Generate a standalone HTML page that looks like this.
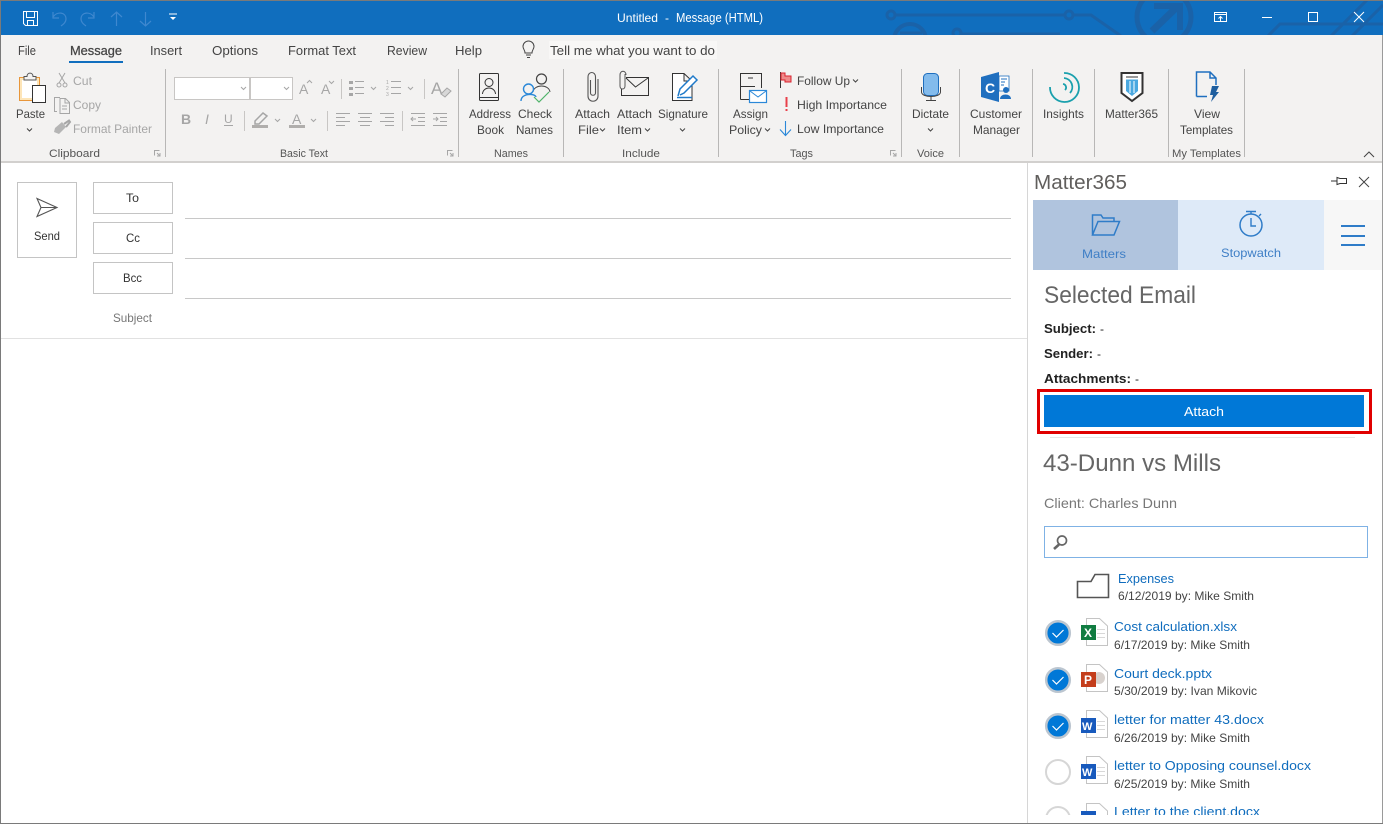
<!DOCTYPE html>
<html lang="en"><head><meta charset="utf-8"><title>Untitled - Message (HTML)</title>
<style>
html,body{margin:0;padding:0;background:#fff;width:1383px;height:824px;overflow:hidden}
svg{display:block;position:absolute;left:0;top:0}
text{font-family:"Liberation Sans",sans-serif;font-size:12px;fill:#444;white-space:pre}
.t{font-size:13px;fill:#444}
.dis{fill:#a6a6a6}
.g{font-size:11px;fill:#555}
.l{fill:#0f6cbd;font-size:13px}
.s{fill:#444;font-size:12px}
.h{font-size:24px;fill:#666}
.b{font-weight:bold;font-size:13px;fill:#222}
.ln{fill:none;stroke:#444;stroke-width:1}
.dl{fill:none;stroke:#a6a6a6;stroke-width:1}
</style></head><body>
<svg width="1383" height="824" viewBox="0 0 1383 824" xmlns="http://www.w3.org/2000/svg">
<defs><clipPath id="tb"><rect x="0" y="1" width="1383" height="34"/></clipPath><clipPath id="lst"><rect x="1030" y="560" width="350" height="255"/></clipPath></defs>
<rect width="1383" height="824" fill="#fff"/>
<!-- title bar -->
<rect x="0" y="0" width="1383" height="35" fill="#106ebe"/>
<g clip-path="url(#tb)" fill="none" stroke="#1a62a8" stroke-width="3">
<path d="M896 15H1064M1074 15H1091L1121 36"/><circle cx="891" cy="15" r="4"/><circle cx="1069" cy="15" r="4"/>
<path d="M962 34H1060"/><circle cx="957" cy="33" r="4"/>
<circle cx="910" cy="40" r="16" stroke-width="4"/><path d="M900 33H922" stroke-width="3"/>
<circle cx="1164" cy="17" r="27" stroke-width="5"/>
<path d="M1152 31L1176 8" stroke-width="7"/><path d="M1154 6H1180V30" stroke-width="6"/>
<path d="M1268 36L1280 24H1383M1331 36L1367 0M1352 36L1383 5"/>
</g>
<!-- QAT -->
<g fill="none" stroke="#fff" stroke-width="1">
<path d="M23.500 11.500H37.500V25.500H25.500L23.500 23.500Z"/><path d="M26.500 11.500V17.500H34.500V11.500M27.500 25.500V20.500H33.500V25.500"/>
</g>
<g fill="none" stroke="#3f88cf" stroke-width="1.200">
<path d="M53 12V18H59M53 17C57 11 66 12 66 19C66 22 64 24 61 26"/>
<path d="M94 12V18H88M94 17C90 11 81 12 81 19C81 22 83 24 86 26"/>
<path d="M116.500 26V12M111 17L116.500 12L122 17"/><path d="M145.500 12V26M140 21L145.500 26L151 21"/>
</g>
<path d="M169 14H177" stroke="#fff" stroke-width="1"/><path d="M170 17H176L173 20Z" fill="#fff"/>
<text x="617" y="22" textLength="41" lengthAdjust="spacingAndGlyphs" style="fill:#fff">Untitled</text>
<text x="665" y="22" style="fill:#fff">-</text>
<text x="676" y="22" textLength="87" lengthAdjust="spacingAndGlyphs" style="fill:#fff;font-size:12.500px">Message (HTML)</text>
<g fill="none" stroke="#fff" stroke-width="1">
<path d="M1214.500 12.500H1226.500V21.500H1214.500ZM1214.500 14.500H1226.500M1220.500 21V16.500M1218.500 18.500L1220.500 16.500L1222.500 18.500"/>
<path d="M1262 17.500H1272"/>
<rect x="1308.500" y="12.500" width="9" height="9"/>
<path d="M1354 12L1364 22M1364 12L1354 22"/>
</g>
<!-- ribbon -->
<rect x="0" y="35" width="1383" height="126" fill="#f3f2f1"/>
<rect x="0" y="161" width="1383" height="2" fill="#d2d0ce"/>
<text class="t" x="18" y="55" textLength="18" lengthAdjust="spacingAndGlyphs">File</text>
<text class="t" x="70" y="55" textLength="52" lengthAdjust="spacingAndGlyphs" style="stroke:#444;stroke-width:.25">Message</text>
<rect x="69" y="61" width="54" height="2" fill="#106ebe"/>
<text class="t" x="150" y="55" textLength="32" lengthAdjust="spacingAndGlyphs">Insert</text>
<text class="t" x="212" y="55" textLength="46" lengthAdjust="spacingAndGlyphs">Options</text>
<text class="t" x="288" y="55" textLength="68" lengthAdjust="spacingAndGlyphs">Format Text</text>
<text class="t" x="387" y="55" textLength="40" lengthAdjust="spacingAndGlyphs">Review</text>
<text class="t" x="455" y="55" textLength="27" lengthAdjust="spacingAndGlyphs">Help</text>
<rect x="549" y="41" width="168" height="18" fill="#f8f7f6"/>
<text class="t" x="550" y="55" textLength="165" lengthAdjust="spacingAndGlyphs">Tell me what you want to do</text>
<path d="M525 53C525 50 523 49 523 46.500A5.500 5.500 0 0 1 534 46.500C534 49 532 50 532 53ZM526 55H531M527 57.500H530" fill="none" stroke="#444"/>
<!-- separators -->
<g fill="#b8b7b6">
<rect x="165" y="69" width="1" height="88"/><rect x="458" y="69" width="1" height="88"/><rect x="563" y="69" width="1" height="88"/><rect x="718" y="69" width="1" height="88"/><rect x="901" y="69" width="1" height="88"/><rect x="959" y="69" width="1" height="88"/><rect x="1032" y="69" width="1" height="88"/><rect x="1094" y="69" width="1" height="88"/><rect x="1168" y="69" width="1" height="88"/><rect x="1244" y="69" width="1" height="88"/>
</g>
<!-- clipboard -->
<rect x="19.500" y="77.500" width="20" height="23" fill="#fde5b8" stroke="#e8963a"/>
<rect x="22" y="80" width="15" height="18" fill="#fff"/>
<path d="M24 80V76.500H27C27 72 33 72 33 76.500H36V80Z" fill="#f3f2f1" stroke="#555"/>
<rect x="32.500" y="85.500" width="13" height="17" fill="#fff" stroke="#333"/>
<text x="16" y="118" textLength="29" lengthAdjust="spacingAndGlyphs">Paste</text>
<path d="M27 128.500L29.500 131L32 128.500" fill="none" stroke="#444"/>
<path class="dl" d="M59 73L65 83M65 73L59 83"/><circle class="dl" cx="59" cy="85" r="2"/><circle class="dl" cx="65" cy="85" r="2"/>
<text class="dis" x="73" y="85" textLength="19" lengthAdjust="spacingAndGlyphs">Cut</text>
<path class="dl" d="M57 111.500H54.500V97.500H60M60 100.500V113.500H69.500V102.500L65.500 98.500H60V100.500M65 99V103H69.500M62 106H67M62 109H67"/>
<text class="dis" x="73" y="109" textLength="28" lengthAdjust="spacingAndGlyphs">Copy</text>
<path d="M62 122L66 127L59 134L54 132L55 128Z" fill="#b5b5b5"/><path d="M64 124L69 120.500L70 122L66 127" fill="none" stroke="#a6a6a6" stroke-width="2"/>
<text class="dis" x="73" y="133" textLength="79" lengthAdjust="spacingAndGlyphs">Format Painter</text>
<text class="g" x="49" y="157" textLength="51" lengthAdjust="spacingAndGlyphs">Clipboard</text>
<path class="dl" d="M154.500 155.500V150.500H159.500M157 153L160 156M160 153V156H157"/>
<!-- basic text -->
<rect x="174.500" y="77.500" width="75" height="22" fill="#fff" stroke="#c8c6c4"/>
<rect x="250.500" y="77.500" width="42" height="22" fill="#fff" stroke="#c8c6c4"/>
<path class="dl" d="M241 87L243.500 89.500L246 87M284 87L286.500 89.500L289 87"/>
<text class="dis" x="299" y="94" style="font-size:14px">A</text><path class="dl" d="M307 83L309.500 80.500L312 83"/>
<text class="dis" x="321" y="94" style="font-size:14px">A</text><path class="dl" d="M329 81L331.500 83.500L334 81"/>
<rect x="341" y="79" width="1" height="20" fill="#c8c6c4"/>
<g fill="#a6a6a6"><rect x="349" y="81" width="4" height="3"/><rect x="349" y="87" width="4" height="3"/><rect x="349" y="93" width="4" height="3"/><rect x="355" y="81" width="9" height="1"/><rect x="355" y="87" width="9" height="1"/><rect x="355" y="93" width="9" height="1"/>
<rect x="391" y="81" width="10" height="1"/><rect x="391" y="87" width="10" height="1"/><rect x="391" y="93" width="10" height="1"/>
<rect x="424" y="79" width="1" height="20" fill="#c8c6c4"/></g>
<g class="dis"><text class="dis" x="386" y="84" style="font-size:5px">1</text><text class="dis" x="386" y="90" style="font-size:5px">2</text><text class="dis" x="386" y="96" style="font-size:5px">3</text></g>
<path class="dl" d="M371 87L373.500 89.500L376 87M408 87L410.500 89.500L413 87"/>
<text class="dis" x="431" y="94" style="font-size:17px">A</text>
<path d="M441 94L447 88L451 91L445 97Z" fill="#d8d8d8" stroke="#a6a6a6"/>
<text class="dis" x="181" y="124" style="font-size:14px;font-weight:bold">B</text>
<text class="dis" x="205" y="124" style="font-size:14px;font-style:italic">I</text>
<text class="dis" x="224" y="123" style="font-size:12px">U</text><rect x="224" y="125" width="9" height="1" fill="#a6a6a6"/>
<rect x="244" y="111" width="1" height="20" fill="#c8c6c4"/>
<path d="M255 121L263 113L267 116L259 124H255Z" fill="none" stroke="#a6a6a6" stroke-width="1.500"/><rect x="252" y="125" width="16" height="3" fill="#b0aeac"/>
<path class="dl" d="M275 119L277.500 121.500L280 119M311 119L313.500 121.500L316 119"/>
<text class="dis" x="292" y="124" style="font-size:14px">A</text><rect x="289" y="125" width="16" height="3" fill="#b0aeac"/>
<rect x="327" y="111" width="1" height="20" fill="#c8c6c4"/>
<g fill="#a6a6a6">
<rect x="336" y="113" width="14" height="1"/><rect x="336" y="117" width="9" height="1"/><rect x="336" y="121" width="14" height="1"/><rect x="336" y="125" width="9" height="1"/>
<rect x="358" y="113" width="14" height="1"/><rect x="360" y="117" width="10" height="1"/><rect x="358" y="121" width="14" height="1"/><rect x="360" y="125" width="10" height="1"/>
<rect x="380" y="113" width="14" height="1"/><rect x="385" y="117" width="9" height="1"/><rect x="380" y="121" width="14" height="1"/><rect x="385" y="125" width="9" height="1"/>
<rect x="402" y="111" width="1" height="20" fill="#c8c6c4"/>
<rect x="411" y="113" width="14" height="1"/><rect x="418" y="117" width="7" height="1"/><rect x="418" y="121" width="7" height="1"/><rect x="411" y="125" width="14" height="1"/>
<rect x="433" y="113" width="14" height="1"/><rect x="440" y="117" width="7" height="1"/><rect x="440" y="121" width="7" height="1"/><rect x="433" y="125" width="14" height="1"/>
</g>
<path class="dl" d="M416 119H411M413 117L411 119L413 121M433 119H438M436 117L438 119L436 121"/>
<text class="g" x="280" y="157" textLength="48" lengthAdjust="spacingAndGlyphs">Basic Text</text>
<path class="dl" d="M447.500 155.500V150.500H452.500M450 153L453 156M453 153V156H450"/>
<!-- names -->
<rect x="479.500" y="73.500" width="19" height="27" rx="1" fill="none" stroke="#333"/><path d="M480 97.500H498" stroke="#333"/>
<circle cx="489" cy="82.500" r="4" fill="none" stroke="#333"/><path d="M482.500 94C483 86 495 86 495.500 94" fill="none" stroke="#333"/>
<text x="469" y="118" textLength="42" lengthAdjust="spacingAndGlyphs">Address</text>
<text x="477" y="134" textLength="27" lengthAdjust="spacingAndGlyphs">Book</text>
<circle cx="541.500" cy="79" r="5" fill="none" stroke="#444" stroke-width="1.200"/><path d="M533 92C534 84 549 84 550 92" fill="none" stroke="#444"/>
<circle cx="528.500" cy="89" r="5" fill="#f3f2f1" stroke="#2b88d8" stroke-width="1.400"/><path d="M521 101C521 93 535 93 536 97" fill="none" stroke="#2b88d8" stroke-width="1.400"/>
<path d="M534 97L539 102L549 92" fill="none" stroke="#4fb36a" stroke-width="1.200"/>
<text x="518" y="118" textLength="34" lengthAdjust="spacingAndGlyphs">Check</text>
<text x="516" y="134" textLength="37" lengthAdjust="spacingAndGlyphs">Names</text>
<text class="g" x="494" y="157" textLength="34" lengthAdjust="spacingAndGlyphs">Names</text>
<!-- include -->
<path d="M598 79V96C598 103 588 103 588 96V77C588 71 595.500 71 595.500 77V93C595.500 96 590.500 96 590.500 93V80" fill="none" stroke="#555" stroke-width="1.100"/>
<text x="575" y="118" textLength="35" lengthAdjust="spacingAndGlyphs">Attach</text>
<text x="578" y="134" textLength="21" lengthAdjust="spacingAndGlyphs">File</text><path class="ln" d="M600 128.500L602.500 131L605 128.500"/>
<path d="M626 77.500H648.500V95.500H621.500V87M626 78L635.500 87L648 78" fill="none" stroke="#333"/>
<path d="M625 74V86C625 90 620 90 620 86V75C620 70 626 70 626 75" fill="#f3f2f1" stroke="#555"/>
<text x="617" y="118" textLength="35" lengthAdjust="spacingAndGlyphs">Attach</text>
<text x="617" y="134" textLength="25" lengthAdjust="spacingAndGlyphs">Item</text><path class="ln" d="M645 128.500L647.500 131L650 128.500"/>
<path d="M672 73.500H684L692 81V100.500H672.500V73.500ZM684 74V81H692" fill="#fff" stroke="#333"/>
<path d="M678 96L680 89L693 76L697 80L684 93L680 95" fill="#fff" stroke="#1f7ac9" stroke-width="1.500"/><path d="M677 97.500H692" stroke="#1f7ac9" stroke-width="1.500"/>
<text x="658" y="118" textLength="50" lengthAdjust="spacingAndGlyphs">Signature</text><path class="ln" d="M680 128.500L682.500 131L685 128.500"/>
<text class="g" x="622" y="157" textLength="38" lengthAdjust="spacingAndGlyphs">Include</text>
<!-- tags -->
<path d="M740.500 99.500V73.500H761.500V88M740.500 86.500H755M740.500 99.500H749M748 78H753" fill="none" stroke="#333"/>
<rect x="749.500" y="90.500" width="17" height="12" fill="#fff" stroke="#2b88d8" stroke-width="1.200"/><path d="M750 91L758 97L766 91" fill="none" stroke="#2b88d8"/>
<text x="733" y="118" textLength="35" lengthAdjust="spacingAndGlyphs">Assign</text>
<text x="729" y="134" textLength="33" lengthAdjust="spacingAndGlyphs">Policy</text><path class="ln" d="M765 128.500L767.500 131L770 128.500"/>
<path d="M780.500 72V88" stroke="#333"/><path d="M781 73H785V76H791V82H785V80H781Z" fill="#ef8a8a" stroke="#d9232e"/>
<text x="797" y="85" textLength="53" lengthAdjust="spacingAndGlyphs">Follow Up</text><path class="ln" d="M853 79.500L855.500 82L858 79.500"/>
<rect x="785.500" y="97" width="2" height="10" fill="#e8404a"/><rect x="785.500" y="109" width="2" height="2" fill="#e8404a"/>
<text x="797" y="109" textLength="90" lengthAdjust="spacingAndGlyphs">High Importance</text>
<path d="M785.500 121V135M780 129.500L785.500 135.500L791 129.500" fill="none" stroke="#2b88d8" stroke-width="1.100"/>
<text x="797" y="133" textLength="87" lengthAdjust="spacingAndGlyphs">Low Importance</text>
<text class="g" x="790" y="157" textLength="23" lengthAdjust="spacingAndGlyphs">Tags</text>
<path class="dl" d="M890.500 155.500V150.500H895.500M893 153L896 156M896 153V156H893"/>
<!-- voice -->
<rect x="923.500" y="73.500" width="15" height="22" rx="4" fill="#83bbec" stroke="#1f6fbf"/>
<path d="M921.500 87V92C921.500 98 940.500 98 940.500 92V87M931 97V100M926 100.500H936" fill="none" stroke="#444"/>
<text x="912" y="118" textLength="37" lengthAdjust="spacingAndGlyphs">Dictate</text><path class="ln" d="M928 128.500L930.500 131L933 128.500"/>
<text class="g" x="917" y="157" textLength="27" lengthAdjust="spacingAndGlyphs">Voice</text>
<!-- customer manager -->
<path d="M981 77L999 72V102L981 97Z" fill="#1f6fbf"/>
<rect x="999" y="76" width="10" height="15" fill="#fff" stroke="#1f6fbf" stroke-width=".8"/>
<path d="M1001 79H1007M1001 82H1005M1001 85H1004" stroke="#1f6fbf"/>
<text x="985" y="93" style="font-size:14px;font-weight:bold;fill:#fff">C</text>
<circle cx="1006" cy="90" r="3" fill="#1f6fbf"/><path d="M1000 99C1000 93 1011 93 1011 99Z" fill="#1f6fbf"/>
<text x="970" y="118" textLength="52" lengthAdjust="spacingAndGlyphs">Customer</text>
<text x="973" y="134" textLength="47" lengthAdjust="spacingAndGlyphs">Manager</text>
<!-- insights -->
<g fill="none" stroke="#1aa0ad" stroke-width="1.800">
<path d="M1064 73A14.500 14.500 0 1 1 1050 87"/><path d="M1064 78A9 9 0 0 1 1070 93"/><path d="M1063 84A3.500 3.500 0 0 1 1065 90"/>
</g>
<text x="1043" y="118" textLength="41" lengthAdjust="spacingAndGlyphs">Insights</text>
<!-- matter365 -->
<path d="M1121.500 73H1142.500V93L1132 101L1121.500 93Z" fill="#fff" stroke="#333" stroke-width="2"/>
<path d="M1126 77H1138" stroke="#333"/><path d="M1126 79.500H1138V91L1132 96L1126 91Z" fill="#4aa8e0"/><path d="M1130 81V93M1134 81V93" stroke="#fff"/>
<text x="1105" y="118" textLength="53" lengthAdjust="spacingAndGlyphs">Matter365</text>
<!-- templates -->
<path d="M1196.500 96.500V72H1210L1216 78V85M1196.500 96.500H1207M1210 72V78H1216" fill="none" stroke="#1f6fbf" stroke-width="1.500"/>
<path d="M1212 86H1219L1216 92H1219L1211 102L1213 95H1210Z" fill="#1f5f9f"/>
<text x="1194" y="118" textLength="26" lengthAdjust="spacingAndGlyphs">View</text>
<text x="1180" y="134" textLength="53" lengthAdjust="spacingAndGlyphs">Templates</text>
<text class="g" x="1172" y="157" textLength="69" lengthAdjust="spacingAndGlyphs">My Templates</text>
<path d="M1364 157L1369 152L1374 157" fill="none" stroke="#444"/>
<!-- compose -->
<rect x="17.500" y="182.500" width="59" height="75" fill="#fff" stroke="#c4c4c4"/>
<path d="M37 198.500L57 207.500L37 216.500L41 207.500ZM41 207.500H57" fill="none" stroke="#555" stroke-width="1.100"/>
<text x="34" y="240" textLength="26" lengthAdjust="spacingAndGlyphs" style="fill:#333">Send</text>
<rect x="93.500" y="182.500" width="79" height="31" fill="#fff" stroke="#c4c4c4"/>
<rect x="93.500" y="222.500" width="79" height="31" fill="#fff" stroke="#c4c4c4"/>
<rect x="93.500" y="262.500" width="79" height="31" fill="#fff" stroke="#c4c4c4"/>
<text x="126" y="202" textLength="13" lengthAdjust="spacingAndGlyphs" style="fill:#333">To</text>
<text x="126" y="242" textLength="14" lengthAdjust="spacingAndGlyphs" style="fill:#333">Cc</text>
<text x="123" y="282" textLength="19" lengthAdjust="spacingAndGlyphs" style="fill:#333">Bcc</text>
<text x="113" y="322" textLength="39" lengthAdjust="spacingAndGlyphs" style="fill:#777">Subject</text>
<g fill="#c8c8c8"><rect x="185" y="218" width="826" height="1"/><rect x="185" y="258" width="826" height="1"/><rect x="185" y="298" width="826" height="1"/></g>
<rect x="1" y="338" width="1026" height="1" fill="#e1e1e1"/>
<!-- panel -->
<rect x="1027" y="163" width="1" height="660" fill="#d6d6d6"/>
<text x="1034" y="189" textLength="93" lengthAdjust="spacingAndGlyphs" style="font-size:20px;fill:#605e5c">Matter365</text>
<path d="M1331 181H1337M1337 177.500V184.500L1340 183.500H1346.500V178.500H1340Z" fill="none" stroke="#333"/>
<path d="M1359 177L1369 187M1369 177L1359 187" fill="none" stroke="#444"/>
<rect x="1033" y="200" width="145" height="70" fill="#b0c4de"/>
<rect x="1178" y="200" width="146" height="70" fill="#deeaf8"/>
<rect x="1324" y="200" width="59" height="70" fill="#f7f7f7"/>
<path d="M1092.500 235V215H1101L1103 218H1114V221M1092.500 235L1098 221.500H1119.500L1114 235Z" fill="none" stroke="#2f7cc8" stroke-width="1.500"/>
<text x="1082" y="258" textLength="44" lengthAdjust="spacingAndGlyphs" style="fill:#3f7fc6">Matters</text>
<circle cx="1251" cy="225" r="11" fill="none" stroke="#2f7cc8" stroke-width="1.500"/><path d="M1251 218V226H1256M1246 211.500H1256M1251 212V214M1259 216L1261 214" fill="none" stroke="#2f7cc8" stroke-width="1.400"/>
<text x="1221" y="257" textLength="60" lengthAdjust="spacingAndGlyphs" style="fill:#3f7fc6">Stopwatch</text>
<g fill="#2f7cc8"><rect x="1341" y="225" width="24" height="2"/><rect x="1341" y="235" width="24" height="2"/><rect x="1341" y="244" width="24" height="2"/></g>
<text class="h" x="1044" y="303" textLength="152" lengthAdjust="spacingAndGlyphs">Selected Email</text>
<text class="b" x="1044" y="333" textLength="52" lengthAdjust="spacingAndGlyphs">Subject:</text><text x="1100" y="333" style="fill:#222">-</text>
<text class="b" x="1044" y="358" textLength="49" lengthAdjust="spacingAndGlyphs">Sender:</text><text x="1097" y="358" style="fill:#222">-</text>
<text class="b" x="1044" y="383" textLength="87" lengthAdjust="spacingAndGlyphs">Attachments:</text><text x="1135" y="383" style="fill:#222">-</text>
<rect x="1038.500" y="390.500" width="332" height="42" fill="none" stroke="#e00000" stroke-width="3"/>
<rect x="1044" y="395" width="320" height="32" fill="#0078d7"/>
<text x="1184" y="416" textLength="40" lengthAdjust="spacingAndGlyphs" style="fill:#fff;font-size:13px">Attach</text>
<rect x="1050" y="437" width="305" height="1" fill="#e6e6e6"/>
<text class="h" x="1043" y="471" textLength="178" lengthAdjust="spacingAndGlyphs">43-Dunn vs Mills</text>
<text x="1044" y="508" textLength="133" lengthAdjust="spacingAndGlyphs" style="font-size:14px;fill:#777">Client: Charles Dunn</text>
<rect x="1044.500" y="526.500" width="323" height="31" fill="#fff" stroke="#7fb2e5"/>
<circle cx="1062" cy="540.500" r="4.500" fill="none" stroke="#666" stroke-width="1.700"/><path d="M1059 544.500L1054 549" stroke="#666" stroke-width="2.600"/>
<!-- list -->
<path d="M1077.500 597.500V581.500H1091L1095 574.500H1108.500V597.500Z" fill="none" stroke="#555" stroke-width="1.600"/>
<text class="l" x="1118" y="583" textLength="56" lengthAdjust="spacingAndGlyphs">Expenses</text>
<text class="s" x="1118" y="600" textLength="136" lengthAdjust="spacingAndGlyphs">6/12/2019 by: Mike Smith</text>
<g clip-path="url(#lst)">
<g fill="#0078d7" stroke="#bcc6d0" stroke-width="2.500">
<circle cx="1058" cy="633" r="11.800"/><circle cx="1058" cy="680" r="11.800"/><circle cx="1058" cy="726" r="11.800"/>
</g>
<g fill="none" stroke="#fff" stroke-width="1.200">
<path d="M1052.500 633L1056.500 637L1063.500 630"/><path d="M1052.500 680L1056.500 684L1063.500 677"/><path d="M1052.500 726L1056.500 730L1063.500 723"/>
</g>
<circle cx="1058" cy="772" r="12" fill="#fff" stroke="#d6d6d6" stroke-width="2"/>
<circle cx="1058" cy="819" r="12" fill="#fff" stroke="#d6d6d6" stroke-width="2"/>
<!-- doc icons -->
<g fill="#fff" stroke="#c4c4c4">
<path d="M1086.500 618.500H1099.500L1107.500 626V645.500H1086.500Z"/><path d="M1086.500 664.500H1099.500L1107.500 672V691.500H1086.500Z"/><path d="M1086.500 710.500H1099.500L1107.500 718V737.500H1086.500Z"/><path d="M1086.500 756.500H1099.500L1107.500 764V783.500H1086.500Z"/><path d="M1086.500 803.500H1099.500L1107.500 811V830.500H1086.500Z"/>
</g>
<g fill="#d8d8d8"><rect x="1097" y="629" width="8" height="1"/><rect x="1097" y="633" width="8" height="1"/><rect x="1097" y="637" width="8" height="1"/><rect x="1097" y="721" width="8" height="1"/><rect x="1097" y="725" width="8" height="1"/><rect x="1097" y="729" width="8" height="1"/><rect x="1097" y="767" width="8" height="1"/><rect x="1097" y="771" width="8" height="1"/><rect x="1097" y="775" width="8" height="1"/></g>
<rect x="1081" y="625" width="15" height="15" fill="#107c41"/><text x="1084" y="637" style="font-weight:bold;font-size:12px;fill:#fff">X</text>
<circle cx="1099" cy="678" r="6" fill="#d8d2ce"/>
<rect x="1081" y="672" width="15" height="15" fill="#c43e1c"/><text x="1084" y="684" style="font-weight:bold;font-size:12px;fill:#fff">P</text>
<rect x="1081" y="718" width="15" height="15" fill="#185abd"/><text x="1082" y="730" style="font-weight:bold;font-size:11px;fill:#fff">W</text>
<rect x="1081" y="764" width="15" height="15" fill="#185abd"/><text x="1082" y="776" style="font-weight:bold;font-size:11px;fill:#fff">W</text>
<rect x="1081" y="811" width="15" height="15" fill="#185abd"/>
<text class="l" x="1114" y="631" textLength="123" lengthAdjust="spacingAndGlyphs">Cost calculation.xlsx</text>
<text class="s" x="1114" y="649" textLength="136" lengthAdjust="spacingAndGlyphs">6/17/2019 by: Mike Smith</text>
<text class="l" x="1114" y="678" textLength="98" lengthAdjust="spacingAndGlyphs">Court deck.pptx</text>
<text class="s" x="1114" y="695" textLength="143" lengthAdjust="spacingAndGlyphs">5/30/2019 by: Ivan Mikovic</text>
<text class="l" x="1114" y="724" textLength="150" lengthAdjust="spacingAndGlyphs">letter for matter 43.docx</text>
<text class="s" x="1114" y="742" textLength="136" lengthAdjust="spacingAndGlyphs">6/26/2019 by: Mike Smith</text>
<text class="l" x="1114" y="770" textLength="197" lengthAdjust="spacingAndGlyphs">letter to Opposing counsel.docx</text>
<text class="s" x="1114" y="788" textLength="136" lengthAdjust="spacingAndGlyphs">6/25/2019 by: Mike Smith</text>
<text class="l" x="1114" y="816" textLength="146" lengthAdjust="spacingAndGlyphs">Letter to the client.docx</text>
</g>
<!-- window border -->
<rect x="0" y="0" width="1383" height="1" fill="#7a7a7a"/>
<rect x="0" y="0" width="1" height="824" fill="#7a7a7a"/>
<rect x="1382" y="35" width="1" height="789" fill="#9a9a9a"/>
<rect x="0" y="823" width="1383" height="1" fill="#7a7a7a"/>
</svg>
</body></html>
